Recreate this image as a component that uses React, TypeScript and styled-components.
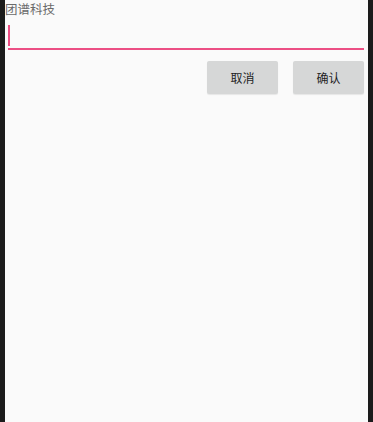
import styled, { createGlobalStyle } from "styled-components";

const GlobalStyle = createGlobalStyle`
    html, body {
        margin: 0;
        padding: 0;
        background-color: #1b1b1b;
    }
    body {
        font-family: "Noto Sans CJK SC", "Noto Sans", sans-serif;
    }
`

const Frame = styled.div`
    display: flex;
    justify-content: center;
    height: 422px;
    padding: 0 5px;
    box-sizing: border-box;
`

const Screen = styled.main`
    display: flex;
    flex-direction: column;
    width: 363px;
    height: 100%;
    background-color: #fafafa;
`

const Title = styled.div`
    font-size: 12.5px;
    line-height: 17px;
    color: #6b6b6b;
`

const InputWrap = styled.div`
    display: flex;
    align-items: flex-start;
    height: 23px;
    margin: 8px 4px 0 3px;
    border-bottom: 2px solid #ec4f84;
`

const Caret = styled.span`
    display: block;
    width: 2px;
    height: 21px;
    background-color: #ec4f84;
`

const Actions = styled.div`
    display: flex;
    justify-content: flex-end;
    gap: 15px;
    padding: 11px 4px 0 0;
`

const Button = styled.button`
    width: 71px;
    height: 33px;
    border: none;
    border-radius: 2px;
    background-color: #d6d7d7;
    color: #1e1e1e;
    font-family: inherit;
    font-size: 12px;
    box-shadow: 0 1px 1px rgba(0, 0, 0, 0.08);
    cursor: pointer;
`

export default function App() {
    return (
        <Frame>
            <GlobalStyle />
            <Screen>
                <Title>团谱科技</Title>
                <InputWrap>
                    <Caret />
                </InputWrap>
                <Actions>
                    <Button>取消</Button>
                    <Button>确认</Button>
                </Actions>
            </Screen>
        </Frame>
    )
}
